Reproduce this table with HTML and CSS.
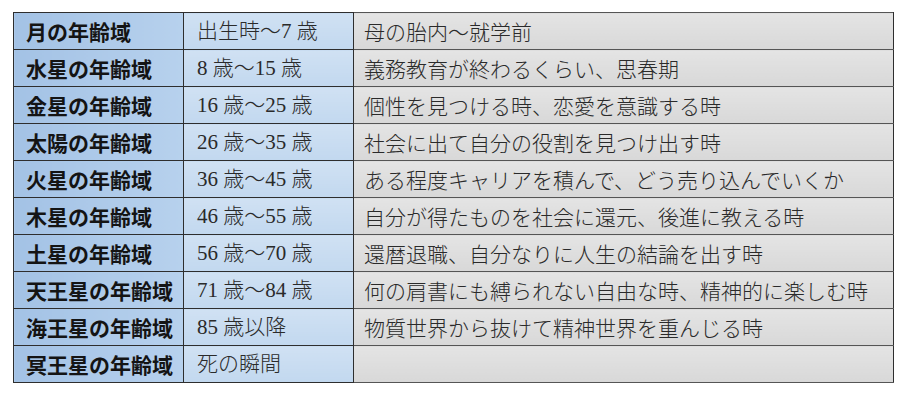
FILE: index.html
```html
<!DOCTYPE html>
<html lang="ja">
<head>
<meta charset="utf-8">
<link rel="stylesheet" href="styles.css">
</head>
<body>
<table class="ages">
<tr><th>月の年齢域</th><td class="range">出生時〜7 歳</td><td class="desc">母の胎内〜就学前</td></tr>
<tr><th>水星の年齢域</th><td class="range">8 歳〜15 歳</td><td class="desc">義務教育が終わるくらい、思春期</td></tr>
<tr><th>金星の年齢域</th><td class="range">16 歳〜25 歳</td><td class="desc">個性を見つける時、恋愛を意識する時</td></tr>
<tr><th>太陽の年齢域</th><td class="range">26 歳〜35 歳</td><td class="desc">社会に出て自分の役割を見つけ出す時</td></tr>
<tr><th>火星の年齢域</th><td class="range">36 歳〜45 歳</td><td class="desc">ある程度キャリアを積んで、どう売り込んでいくか</td></tr>
<tr><th>木星の年齢域</th><td class="range">46 歳〜55 歳</td><td class="desc">自分が得たものを社会に還元、後進に教える時</td></tr>
<tr><th>土星の年齢域</th><td class="range">56 歳〜70 歳</td><td class="desc">還暦退職、自分なりに人生の結論を出す時</td></tr>
<tr><th>天王星の年齢域</th><td class="range">71 歳〜84 歳</td><td class="desc">何の肩書にも縛られない自由な時、精神的に楽しむ時</td></tr>
<tr><th>海王星の年齢域</th><td class="range">85 歳以降</td><td class="desc">物質世界から抜けて精神世界を重んじる時</td></tr>
<tr><th>冥王星の年齢域</th><td class="range">死の瞬間</td><td class="desc"></td></tr>
</table>
</body>
</html>
```
FILE: styles.css
```css
html, body {
  margin: 0;
  padding: 0;
  background: #ffffff;
}
body {
  padding: 12px 0 0 13px;
}
.ages {
  border-collapse: collapse;
  table-layout: fixed;
  width: 881px;
  font-family: "Liberation Serif", "Noto Sans CJK JP", serif;
  color: #1c1c1c;
}
.ages th,
.ages td {
  height: 36px;
  padding: 0;
  border: 1px solid #2e2e2e;
  font-size: 21px;
  line-height: 1;
  text-align: left;
  vertical-align: middle;
  white-space: nowrap;
}
.ages th {
  width: 170px;
  padding-left: 12px;
  box-sizing: border-box;
  font-family: "Noto Sans CJK JP", sans-serif;
  font-weight: 700;
  color: #141414;
  background: linear-gradient(to right, #a3c2e5, #b7d1ed);
}
.ages td.range {
  width: 170px;
  padding-left: 13px;
  box-sizing: border-box;
  font-weight: 300;
  background: linear-gradient(to bottom, #d0e1f3, #c2d8ef);
  color: #2a2a2a;
}
.ages td.desc {
  padding-left: 10px;
  font-family: "Noto Sans CJK JP", sans-serif;
  font-weight: 300;
  background: linear-gradient(to bottom, #e4e4e4, #d8d8d8);
  color: #2a2a2a;
  border-top-color: #555;
  border-bottom-color: #555;
}
```
